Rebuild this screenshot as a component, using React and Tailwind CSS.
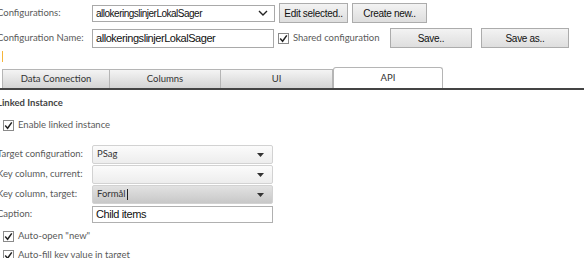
const label = 'whitespace-nowrap text-[9.5px] text-[#5a5a5a] font-["Lato",sans-serif]'
const tab = 'flex h-[19px] items-center justify-center whitespace-nowrap border border-b-0 border-[#b5b5b5] text-[9.5px] text-[#333] font-["Lato",sans-serif]'

function Check() {
  return (
    <span className="inline-flex h-[11px] w-[11px] shrink-0 items-center justify-center border border-[#8a8a8a] bg-white">
      <svg width="9" height="9" viewBox="0 0 9 9">
        <path d="M1.2 4.6 L3.6 7.2 L7.8 1.4" fill="none" stroke="#222" strokeWidth="1.5" />
      </svg>
    </span>
  )
}

function Btn({ children, className = '' }) {
  return (
    <button
      className={
        'h-[20px] whitespace-nowrap border border-[#acacac] bg-gradient-to-b from-[#f3f3f3] to-[#dedede] text-[10px] tracking-[-0.3px] text-[#111] font-["Liberation_Sans",sans-serif] ' +
        className
      }
    >
      {children}
    </button>
  )
}

function Drop({ value, dark }) {
  return (
    <div
      className={
        'flex h-[19px] w-[181px] items-center justify-between rounded-[2px] border border-[#d2d2d2] pl-[4px] pr-[8px] text-[9.5px] text-[#333] font-["Lato",sans-serif] ' +
        (dark ? 'bg-gradient-to-b from-[#e2e2e2] to-[#c8c8c8]' : 'bg-gradient-to-b from-[#fbfbfb] to-[#ededed]')
      }
    >
      <span className="flex items-center">
        {value}
        {dark && <span className="ml-[1px] inline-block h-[11px] w-px bg-[#222]" />}
      </span>
      <svg width="7" height="4" viewBox="0 0 7 4">
        <path d="M0 0 H7 L3.5 4 Z" fill="#333" />
      </svg>
    </div>
  )
}

function Row({ text, children }) {
  return (
    <div className="flex h-[19px] items-center">
      <span className={label + ' w-[95px]'}>{text}</span>
      {children}
    </div>
  )
}

function CheckRow({ text, className = '' }) {
  return (
    <div className={'flex h-[18px] items-center pl-[6px] ' + className}>
      <Check />
      <span className={label + ' ml-[4px]'}>{text}</span>
    </div>
  )
}

export default function App() {
  return (
    <div className="h-[258px] w-[584px] overflow-hidden bg-white">
      <div className="ml-[-3px]">
        <div className="flex h-[26px] items-center">
          <span className={label + ' w-[95px]'}>Configurations:</span>
          <div className='flex h-[17px] w-[183px] items-center justify-between border border-[#a9a9a9] bg-white pl-[3px] pr-[6px] text-[10px] tracking-[-0.5px] text-[#111] font-["Liberation_Sans",sans-serif]'>
            <span>allokeringslinjerLokalSager</span>
            <svg width="10" height="6" viewBox="0 0 10 6">
              <path d="M1 1 L5 5 L9 1" fill="none" stroke="#222" strokeWidth="1.4" />
            </svg>
          </div>
          <Btn className="ml-[4px] w-[69px]">Edit selected..</Btn>
          <Btn className="ml-[4px] w-[75px]">Create new..</Btn>
        </div>

        <div className="flex h-[24px] items-center">
          <span className={label + ' w-[95px]'}>Configuration Name:</span>
          <div className='flex h-[19px] w-[182px] items-center border border-[#a9a9a9] bg-white pl-[3px] text-[11px] tracking-[-0.45px] text-[#111] font-["Liberation_Sans",sans-serif]'>
            allokeringslinjerLokalSager
          </div>
          <span className="ml-[4px] flex"><Check /></span>
          <span className={label + ' ml-[4px] w-[95px]'}>Shared configuration</span>
          <Btn className="ml-[2px] w-[82px]">Save..</Btn>
          <Btn className="ml-[9px] w-[88px]">Save as..</Btn>
        </div>

        <div className="h-[19px] pl-[5px] pt-[1px]">
          <div className="h-[11px] w-px bg-[#f5b53a]" />
        </div>

        <div className="flex h-[21px] items-end border-b-2 border-[#444]">
          <div className={tab + ' ml-[5px] w-[108px] bg-gradient-to-b from-[#f4f4f4] to-[#d4d4d4]'}>Data Connection</div>
          <div className={tab + ' w-[111px] border-l-0 bg-gradient-to-b from-[#f4f4f4] to-[#d4d4d4]'}>Columns</div>
          <div className={tab + ' w-[112px] border-l-0 bg-gradient-to-b from-[#f4f4f4] to-[#d4d4d4]'}>UI</div>
          <div className={tab + ' h-[21px] w-[110px] rounded-t-[3px] bg-white text-[#222]'}>API</div>
        </div>

        <div className='flex h-[26px] items-center text-[9.5px] font-bold text-[#444] font-["Lato",sans-serif]'>Linked Instance</div>

        <CheckRow text="Enable linked instance" />

        <div className="mt-[11px] flex flex-col gap-[1px]">
          <Row text="Target configuration:"><Drop value="PSag" /></Row>
          <Row text="Key column, current:"><Drop value="" /></Row>
          <Row text="Key column, target:"><Drop value="Formål" dark /></Row>
          <Row text="Caption:">
            <div className='flex h-[17px] w-[181px] items-center border border-[#b0b0b0] bg-white pl-[3px] text-[11px] tracking-[-0.4px] text-[#111] font-["Liberation_Sans",sans-serif]'>Child items</div>
          </Row>
        </div>

        <CheckRow text={'Auto-open "new"'} className="mt-[3px]" />
        <CheckRow text="Auto-fill key value in target" className="mt-[1px]" />
      </div>
    </div>
  )
}
